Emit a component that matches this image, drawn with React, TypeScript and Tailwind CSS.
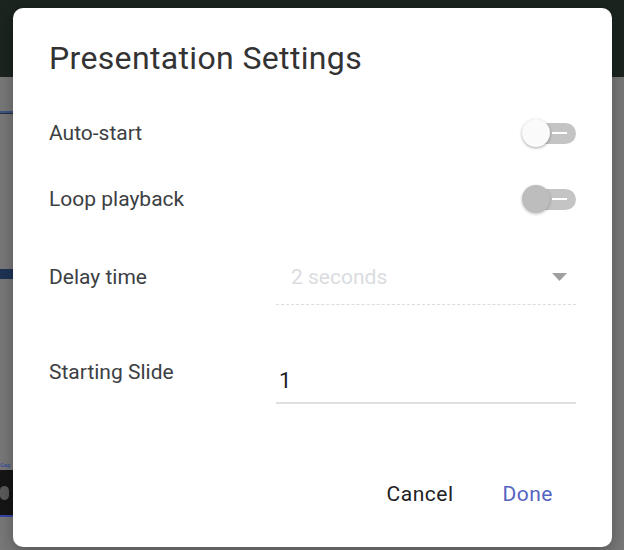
import React from "react";

function Toggle({ knob }: { knob: "white" | "gray" }) {
  return (
    <div className="relative w-[56px] h-[30px] flex items-center">
      <div className="ml-[14px] w-[42px] h-[21px] rounded-full bg-[#c4c4c4] flex items-center justify-end pr-[9px]">
        <div className="w-[15px] h-[2px] bg-white" />
      </div>
      <div
        className={
          knob === "white"
            ? "absolute left-[2px] top-[1px] w-[28px] h-[28px] rounded-full bg-[#fafafa] shadow-[0_1px_3px_rgba(0,0,0,0.35)]"
            : "absolute left-[2px] top-[1px] w-[28px] h-[28px] rounded-full bg-[#bdbdbd] shadow-[0_1px_3px_rgba(0,0,0,0.25)]"
        }
      />
    </div>
  );
}

export default function App() {
  return (
    <div
      className="relative w-[624px] h-[550px] overflow-hidden bg-[#787878]"
      style={{ fontFamily: "Roboto, 'Liberation Sans', sans-serif" }}
    >
      {/* app behind the dialog */}
      <div className="h-[77px] bg-[#1b241f]" />
      <div className="w-[13px] flex flex-col">
        <div className="mt-[34px] h-[2px] bg-[#3d5286]" />
        <div className="h-[1px] bg-[#2a2f3a]" />
        <div className="mt-[155px] h-[10px] bg-[#1f3356]" />
        <div className="mt-[182px] text-[6px] leading-[8px] text-[#2f4aa0] overflow-hidden">Gap</div>
        <div className="mt-[1px] h-[45px] bg-[#151515] flex items-center">
          <div className="w-[9px] h-[14px] rounded-full bg-[#5a5a5a]" />
        </div>
        <div className="h-[2px] bg-[#3846a8]" />
      </div>

      {/* dialog */}
      <div className="absolute left-[13px] top-[8px] w-[599px] h-[539px] rounded-[10px] bg-white shadow-[0_4px_16px_rgba(0,0,0,0.3)] flex flex-col pl-[36px] pr-[36px] pt-[32px]">
        <h1 className="h-[36px] text-[32px] leading-[36px] text-[#333] tracking-[0.35px]">
          Presentation Settings
        </h1>

        <div className="mt-[24px] h-[66px] flex items-center justify-between">
          <span className="text-[21px] leading-[24px] text-[#3c4043]">Auto-start</span>
          <Toggle knob="white" />
        </div>
        <div className="h-[66px] flex items-center justify-between">
          <span className="text-[21px] leading-[24px] text-[#3c4043]">Loop playback</span>
          <Toggle knob="gray" />
        </div>

        <div className="h-[90px] flex items-center">
          <span className="w-[227px] text-[21px] leading-[24px] text-[#3c4043]">Delay time</span>
          <div className="flex-1 h-[56px] flex items-center justify-between pl-[15px] pr-[9px] border-b border-dashed border-[#dcdcdc]">
            <span className="text-[21px] leading-[24px] text-[#dadce0]">2 seconds</span>
            <svg width="15" height="8" viewBox="0 0 15 8">
              <path d="M0 0 L15 0 L7.5 8 Z" fill="#a0a0a0" />
            </svg>
          </div>
        </div>

        <div className="flex items-start">
          <span className="w-[227px] mt-[38px] text-[21px] leading-[24px] text-[#3c4043]">Starting Slide</span>
          <div className="flex-1 mt-[47px] pl-[3px] pb-[7px] border-b-2 border-[#e0e0e0]">
            <span className="text-[22px] leading-[24px] text-[#202124]">1</span>
          </div>
        </div>

        <div className="mt-auto mb-[34px] mr-[7px] flex justify-end gap-[17px]">
          <button className="h-[36px] px-4 text-[21px] tracking-[0.5px] text-[#202124]">Cancel</button>
          <button className="h-[36px] px-4 text-[21px] tracking-[0.5px] text-[#5563c1]">Done</button>
        </div>
      </div>
    </div>
  );
}
